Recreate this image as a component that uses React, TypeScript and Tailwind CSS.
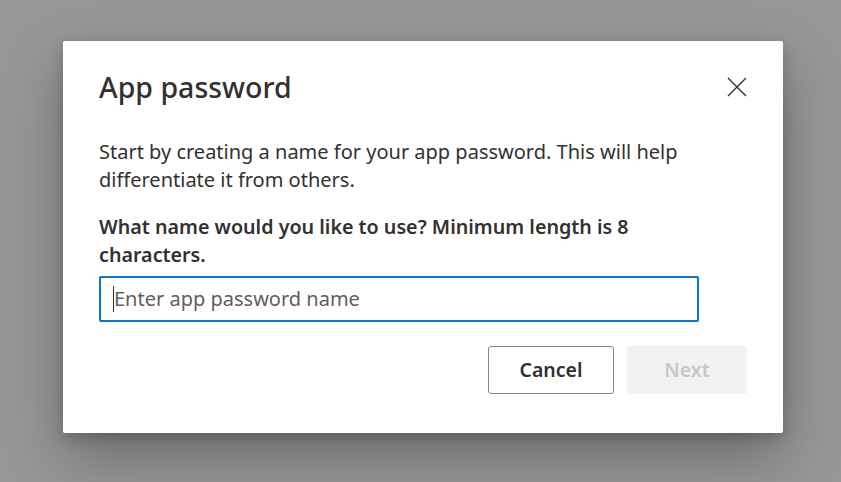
export default function App() {
  return (
    <div
      className="flex h-[482px] w-[841px] items-start bg-[#979797] pl-[63px] pt-[41px]"
      style={{ fontFamily: '"Noto Sans", "Open Sans", sans-serif' }}
    >
      <div className="w-[720px] rounded-[2px] bg-white px-[36px] pb-[39px] pt-[28px] text-[#323130] shadow-[0_25px_60px_rgba(0,0,0,0.28),0_5px_14px_rgba(0,0,0,0.2)]">
        <div className="flex items-center justify-between">
          <h1 className="text-[28.5px] font-medium leading-[36px]">App password</h1>
          <button className="flex h-8 w-8 items-center justify-end text-[#323130]">
            <svg width="20" height="20" viewBox="0 0 20 20" fill="none" stroke="currentColor" strokeWidth="1.4">
              <path d="M1 1L19 19M19 1L1 19" />
            </svg>
          </button>
        </div>
        <p className="mt-[33px] w-[600px] text-[20px] leading-[28px]">
          Start by creating a name for your app password. This will help differentiate it from others.
        </p>
        <p className="mt-[19px] w-[600px] text-[19.7px] font-semibold leading-[28px]">
          What name would you like to use? Minimum length is 8 characters.
        </p>
        <div className="mt-[7px] flex h-[46px] w-[600px] items-center rounded-[2px] border-2 border-[#0078d4] pl-[12px]">
          <span className="h-[26px] w-px bg-[#323130]" />
          <span className="text-[20px] text-[#605e5c]">Enter app password name</span>
        </div>
        <div className="mt-[24px] flex justify-end gap-[13px]">
          <button className="h-[48px] w-[126px] rounded-[3px] border border-[#8a8886] bg-white text-[19.5px] font-semibold text-[#323130]">
            Cancel
          </button>
          <button className="h-[48px] w-[120px] rounded-[3px] bg-[#f3f2f1] text-[19.5px] font-semibold text-[#c8c6c4]">
            Next
          </button>
        </div>
      </div>
    </div>
  );
}
